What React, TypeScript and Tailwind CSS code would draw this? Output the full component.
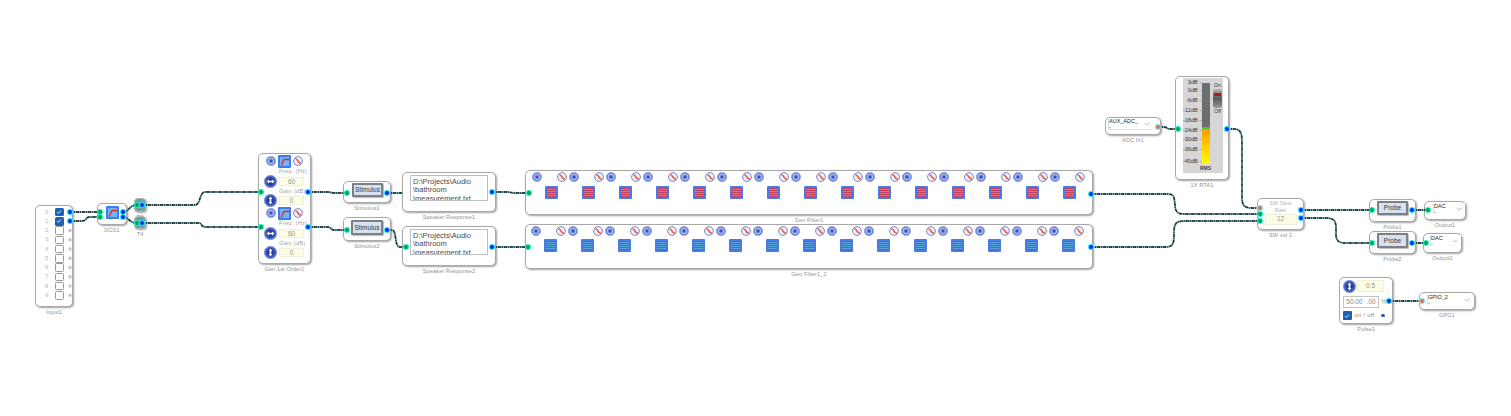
import type { ReactNode } from "react";
import { ChevronDown } from "lucide-react";

const Node = ({
  pos,
  box,
  label,
  children,
}: {
  pos: string;
  box: string;
  label: string;
  children?: ReactNode;
}) => (
  <div className={`absolute flex flex-col items-center ${pos}`}>
    <div className={`shrink-0 rounded-[5px] border border-[#a8a8a8] bg-white shadow-[1px_1px_2px_#a0a0a0] ${box}`}>
      {children}
    </div>
    <span className="mt-[1px] text-[5.5px] leading-[8px] tracking-[0.15px] whitespace-nowrap text-[#8f8f8f]">{label}</span>
  </div>
);

const CircleIcon = () => (
  <svg width="10" height="10" viewBox="0 0 10 10" className="shrink-0">
    <circle cx="5" cy="5" r="4.6" fill="#6a84d8" stroke="#8f9bd8" strokeWidth="0.8" />
    <circle cx="5" cy="5" r="2.8" fill="none" stroke="#c9d4f6" strokeWidth="0.8" />
    <circle cx="5" cy="5" r="1.2" fill="#3553b8" />
  </svg>
);

const WaveIcon = () => (
  <svg width="10" height="10" viewBox="0 0 10 10" className="shrink-0">
    <circle cx="5" cy="5" r="4.4" fill="#eeeef8" stroke="#7a86cc" strokeWidth="1" />
    <path d="M2.4 3.2C3.6 2.4 4.2 4 5 5s1.6 2.6 2.8 1.6" fill="none" stroke="#f0503c" strokeWidth="1.5" />
  </svg>
);

const BandIcon = () => (
  <svg width="13" height="13" viewBox="0 0 13 13" className="shrink-0">
    <rect width="13" height="13" rx="1" fill="#4a78e6" />
    <rect x="2" y="2" width="9" height="9" fill="#5aa4d8" />
    {[2, 4, 6, 8, 10].map((y) => (
      <rect key={y} x="2" y={y} width="9" height="1" fill="#c04060" />
    ))}
  </svg>
);

const FilterIcon = () => (
  <svg width="13" height="13" viewBox="0 0 13 13" className="shrink-0">
    <rect width="13" height="13" rx="1" fill="#3f7cf0" />
    <rect x="2" y="2" width="9" height="9" fill="#6fb4f4" />
    <path d="M3 10.5c1.5 0 1.5-6 3.5-6H11" fill="none" stroke="#e02828" strokeWidth="1.4" />
  </svg>
);

const Knob = ({ vertical }: { vertical?: boolean }) => (
  <svg width="13" height="13" viewBox="0 0 13 13" className="shrink-0">
    <circle cx="6.5" cy="6.5" r="6.2" fill="#4a68d0" stroke="#8494dc" strokeWidth="0.6" />
    <circle cx="6.5" cy="6.5" r="4.2" fill="#2c3f96" />
    {vertical ? (
      <path d="M6.5 2.6 4.6 5h3.8zM6.5 10.4 4.6 8h3.8zM5.7 5h1.6v3H5.7z" fill="#fff" />
    ) : (
      <path d="M2.6 6.5 5 4.6v3.8zM10.4 6.5 8 4.6v3.8zM5 5.7h3v1.6H5z" fill="#fff" />
    )}
  </svg>
);

const Field = ({ value, size }: { value: string; size: string }) => (
  <div className={`flex items-center justify-center border border-[#efefdc] bg-[#fdfde6] text-[6.5px] text-[#929292] ${size}`}>
    {value}
  </div>
);

const GenLabel = ({ text, h }: { text: string; h: string }) => (
  <div className={`ml-[20px] w-[25px] whitespace-nowrap text-center text-[5.5px] tracking-[0.35px] text-[#a0a0a0] ${h}`}>
    {text}
  </div>
);

const GenGroup = () => (
  <div className="flex h-[52px] flex-col">
    <div className="flex h-[12px] items-center gap-[2px] pl-[7px]">
      <CircleIcon />
      <FilterIcon />
      <WaveIcon />
    </div>
    <GenLabel text="Freq. (Hz)" h="h-[8px] leading-[8px]" />
    <div className="flex h-[13px] items-center gap-[2px] pl-[5px]">
      <Knob />
      <Field value="60" size="h-[9px] w-[25px]" />
    </div>
    <GenLabel text="Gain (dB)" h="h-[6px] leading-[6px]" />
    <div className="flex h-[13px] items-center gap-[2px] pl-[5px]">
      <Knob vertical />
      <Field value="0" size="h-[9px] w-[25px]" />
    </div>
  </div>
);

const FilterBands = ({ inset, gap }: { inset: string; gap: string }) => (
  <div className={`flex ${inset}`}>
    {Array.from({ length: 15 }).map((_, i) => (
      <div key={i} className="flex w-[37px] shrink-0 flex-col">
        <div className="flex h-[10px] gap-[15px]">
          <CircleIcon />
          <WaveIcon />
        </div>
        <div className={`pl-[13px] ${gap}`}>
          <BandIcon />
        </div>
      </div>
    ))}
  </div>
);

const PushButton = ({ text, size }: { text: string; size: string }) => (
  <div className={`flex items-center justify-center rounded-[1px] border-2 border-[#7d7f83] bg-[#d6e2f3] text-[6.5px] text-[#333] shadow-[1px_1px_1px_#bbb] ${size}`}>
    {text}
  </div>
);

const SpeakerText = () => (
  <div className="h-[26px] overflow-hidden border border-[#bdbdbd] px-[2px] pt-[1.5px] text-[7.5px] leading-[8.5px] whitespace-nowrap text-[#4a4a4a]">
    <div>D:\Projects\Audio</div>
    <div>\bathroom</div>
    <div>\measurement.txt</div>
  </div>
);

const SelectBox = ({ value, size }: { value: string; size: string }) => (
  <div className={`flex items-center justify-between border-l border-[#ddd] bg-white pr-[2px] ${size}`}>
    <span className="text-[5.5px] leading-[6px] text-[#222]">
      {value}
      <br />-
    </span>
    <ChevronDown size={8} strokeWidth={1.4} className="text-[#777]" />
  </div>
);

const scale = [
  { t: "3dB", h: "h-[8px]" },
  { t: "0dB", h: "h-[10px]" },
  { t: "-6dB", h: "h-[10px]" },
  { t: "-12dB", h: "h-[10px]" },
  { t: "-18dB", h: "h-[10px]" },
  { t: "-24dB", h: "h-[9px]" },
  { t: "-30dB", h: "h-[10px]" },
  { t: "-36dB", h: "h-[12px]" },
  { t: "-45dB", h: "h-[7px]" },
];

const wires = [
  "M70 212H100",
  "M70 221H82C87 221 85 217 90 217H100",
  "M123 212C130 212 128 205 137 205",
  "M123 217C130 217 128 223 137 223",
  "M142 205H195C201 205 199 192 205 192H261",
  "M142 223H199C202 223 201 227 205 227H261",
  "M308 192H328C331 192 331 193 334 193H347",
  "M308 227H328C331 227 331 230 334 230H347",
  "M387 193H403",
  "M387 230H392C397 230 394 247 400 247H406",
  "M492 192H508C511 192 511 193 514 193H529",
  "M492 247H528",
  "M1091 194H1168C1175 194 1174 198 1175 205C1175 212 1178 214 1184 214H1260",
  "M1091 247H1166C1174 247 1174 242 1174 232C1174 224 1176 221 1184 221H1260",
  "M1158 127H1164C1167 127 1167 129 1170 129H1178",
  "M1227 129H1234C1241 129 1242 134 1242 142V198C1242 206 1245 208 1252 208H1260",
  "M1301 210H1372",
  "M1301 218H1326C1334 218 1336 221 1336 228V235C1336 241 1339 243 1346 243H1372",
  "M1412 210H1428",
  "M1412 243H1426",
  "M1389 301H1422",
];

const outPorts = [
  [70, 212], [70, 221], [123, 212], [123, 217], [142, 205], [142, 223],
  [308, 192], [308, 227], [387, 193], [387, 230], [492, 192], [492, 247],
  [1091, 194], [1091, 247], [1227, 129], [1301, 210], [1301, 218],
  [1412, 210], [1412, 243], [1389, 301],
];

const inPorts = [
  [100, 212], [100, 217], [137, 205], [137, 223], [261, 192], [261, 227],
  [347, 193], [347, 230], [406, 247], [529, 193], [528, 247], [1178, 129],
  [1260, 214], [1260, 221], [1372, 210], [1372, 243], [1428, 210], [1426, 243],
];

const orangePorts = [
  [1158, 127], [1260, 208], [1422, 301],
];

// unused channel outputs on the input block
const idlePorts = [2, 3, 4, 5, 6, 7, 8, 9].map((n) => [70, 212 + n * 9.26]);

const App = () => {
  return (
    <div className="relative h-[416px] w-[1511px] overflow-hidden bg-white font-['Liberation_Sans',sans-serif]">
      <Node pos="left-[35px] top-[205px]" box="h-[102px] w-[38px] pt-[1.4px]" label="Input1">
        {Array.from({ length: 10 }).map((_, i) => (
          <div key={i} className="flex h-[9.26px] items-center gap-[6px] pl-[9px]">
            <span className="w-[4px] text-[6px] text-[#b8b8b8]">{i}</span>
            {i < 2 ? (
              <div className="flex h-[8.5px] w-[8.5px] items-center justify-center rounded-[1.5px] bg-[#1d62b0]">
                <svg width="6" height="6" viewBox="0 0 6 6">
                  <path d="M1 3l1.4 1.4L5 1.6" fill="none" stroke="#fff" strokeWidth="0.8" />
                </svg>
              </div>
            ) : (
              <div className="h-[8.5px] w-[8.5px] rounded-[1.5px] border border-[#999] bg-white" />
            )}
          </div>
        ))}
      </Node>

      <Node pos="left-[97px] top-[203px]" box="flex h-[22px] w-[30px] justify-center pt-[2px]" label="DCS1">
        <FilterIcon />
      </Node>

      <Node pos="left-[134px] top-[198px]" box="h-[14px] w-[12px] !rounded-[4px] !bg-[#6f9f9c] !border-[#b5b5b5]" label="T3" />
      <Node pos="left-[134px] top-[216px]" box="h-[13px] w-[12px] !rounded-[4px] !bg-[#6f9f9c] !border-[#b5b5b5]" label="T4" />

      <Node pos="left-[258px] top-[153px]" box="h-[111px] w-[53px] pt-[1px]" label="Gen 1st Order1">
        <GenGroup />
        <GenGroup />
      </Node>

      <Node pos="left-[343px] top-[181px]" box="h-[22px] w-[48px] pt-[1px] pl-[8px]" label="Stimulus1">
        <PushButton text="Stimulus" size="h-[14px] w-[31px]" />
      </Node>
      <Node pos="left-[343px] top-[217px]" box="h-[24px] w-[48px] pt-[2px] pl-[7px]" label="Stimulus2">
        <PushButton text="Stimulus" size="h-[15px] w-[32px]" />
      </Node>

      <Node pos="left-[402px] top-[172px]" box="h-[40px] w-[94px] px-[7px] pt-[2px]" label="Speaker Response1">
        <SpeakerText />
      </Node>
      <Node pos="left-[402px] top-[226px]" box="h-[40px] w-[94px] px-[7px] pt-[2px]" label="Speaker Response2">
        <SpeakerText />
      </Node>

      <Node pos="left-[525px] top-[170px]" box="h-[45px] w-[568px]" label="Gen Filter1">
        <FilterBands inset="pl-[6px] pt-[1px]" gap="pt-[4px]" />
      </Node>
      <Node pos="left-[525px] top-[224px]" box="h-[45px] w-[568px]" label="Gen Filter1_2">
        <FilterBands inset="pl-[5px] pt-[1px]" gap="pt-[3px]" />
      </Node>

      <Node pos="left-[1105px] top-[117px]" box="h-[18px] w-[56px] pl-[2px]" label="ADC In1">
        <SelectBox value="AUX_ADC_" size="mt-[1px] h-[11px] w-[45px] border-b border-[#ccc]" />
      </Node>

      <Node pos="left-[1175px] top-[76px]" box="h-[104px] w-[54px] pl-[7px] pt-[1px]" label="1X RTA1">
        <div className="flex h-[95px] w-[40px] bg-[#d6d6d6]">
          <div className="flex w-[18px] flex-col items-end">
            {scale.map((s) => (
              <div key={s.t} className={`whitespace-nowrap text-[5.5px] leading-[8px] text-[#333] ${s.h}`}>
                {s.t} -
              </div>
            ))}
            <div className="w-full pl-[17px] text-[5px] font-bold leading-[8px] text-[#444]">RMS</div>
          </div>
          <div className="ml-[1px] flex h-[95px] w-[8px] flex-col pt-[5px]">
            <div className="h-[44px] bg-[#6d6d6d]" />
            <div className="h-[1.5px] bg-[#49c23e]" />
            <div className="h-[35px] bg-linear-to-b from-[#ff9a00] to-[#ffff00]" />
          </div>
          <div className="ml-[3px] flex w-[9px] flex-col items-center pt-[4px] text-[5.5px] leading-[7px] text-[#333]">
            <span>On</span>
            <div className="h-[19px] w-[9px] rounded-[2px] bg-linear-to-b from-[#b5b5b5] via-[#5a5a5a] to-[#9a9a9a] px-[1px] pt-[4px]">
              <div className="h-[3px] bg-[#a81c1c]" />
            </div>
            <span>Off</span>
          </div>
        </div>
      </Node>

      <Node pos="left-[1257px] top-[198px]" box="flex h-[32px] w-[47px] flex-col items-center" label="SW vol 1">
        <div className="mt-[1px] text-center text-[5.5px] leading-[6.5px] text-[#b5b5b5]">
          SW Slew
          <br />
          Rate
        </div>
        <Field value="12" size="mt-[0.5px] h-[11px] w-[32px]" />
      </Node>

      <Node pos="left-[1369px] top-[199px]" box="h-[23px] w-[47px] pt-[1px] pl-[7px]" label="Probe1">
        <PushButton text="Probe" size="h-[14px] w-[31px]" />
      </Node>
      <Node pos="left-[1369px] top-[231px]" box="h-[23px] w-[47px] pt-[1px] pl-[7px]" label="Probe2">
        <PushButton text="Probe" size="h-[15px] w-[31px]" />
      </Node>

      <Node pos="left-[1424px] top-[201px]" box="h-[19px] w-[42px] pl-[8px] pt-[1px]" label="Output1">
        <SelectBox value="DAC" size="h-[11px] w-[32px]" />
      </Node>
      <Node pos="left-[1423px] top-[233px]" box="h-[20px] w-[39px] pl-[6px] pt-[1px]" label="Output2">
        <SelectBox value="DAC" size="h-[11px] w-[31px]" />
      </Node>

      <Node pos="left-[1339px] top-[277px]" box="flex h-[47px] w-[54px] flex-col pl-[3px] pt-[2px]" label="Pulse1">
        <div className="flex h-[12px] items-center gap-[1px]">
          <Knob vertical />
          <Field value="0.5" size="h-[12px] w-[27px]" />
        </div>
        <div className="mt-[4px] flex items-center gap-[2px]">
          <div className="flex h-[12px] w-[36px] items-center justify-center gap-[4px] border border-[#c4c4c4] text-[6.5px] text-[#888]">
            <span>50.00</span>
            <span>.00</span>
          </div>
          <span className="text-[6.5px] text-[#999]">%</span>
        </div>
        <div className="mt-[3px] flex items-center gap-[3px]">
          <div className="flex h-[8.5px] w-[8.5px] items-center justify-center rounded-[1px] bg-[#1d62b0]">
            <svg width="6" height="6" viewBox="0 0 6 6">
              <path d="M1 3l1.4 1.4L5 1.6" fill="none" stroke="#fff" strokeWidth="0.8" />
            </svg>
          </div>
          <span className="text-[6px] tracking-[0.2px] text-[#888]">on / off</span>
          <div className="ml-[4px] h-[3.5px] w-[3.5px] rounded-full bg-[#3a50c0]" />
        </div>
      </Node>

      <Node pos="left-[1419px] top-[292px]" box="h-[18px] w-[56px] pl-[7px] pt-[1px]" label="GPO1">
        <SelectBox value="GPIO_2" size="h-[11px] w-[46px]" />
      </Node>

      {/* wires and ports sit on top of the blocks */}
      <svg width="1511" height="416" className="pointer-events-none absolute top-0 left-0">
        {wires.map((d) => (
          <g key={d} fill="none">
            <path d={d} stroke="#86a8a8" strokeWidth="2" />
            <path d={d} stroke="#08262e" strokeWidth="1.3" strokeDasharray="3 1 1 1" />
          </g>
        ))}
        {outPorts.map(([x, y]) => (
          <g key={`o${x}-${y}`}>
            <circle cx={x} cy={y} r="3" fill="#19e8ff" />
            <circle cx={x} cy={y} r="1.9" fill="#0020f0" />
          </g>
        ))}
        {inPorts.map(([x, y]) => (
          <g key={`i${x}-${y}`}>
            <circle cx={x} cy={y} r="3" fill="#19f0d0" />
            <circle cx={x} cy={y} r="1.9" fill="#00a040" />
          </g>
        ))}
        {orangePorts.map(([x, y]) => (
          <g key={`p${x}-${y}`}>
            <circle cx={x} cy={y} r="3" fill="#7ce8e0" />
            <circle cx={x} cy={y} r="1.9" fill="#f06a4a" />
          </g>
        ))}
        {idlePorts.map(([x, y]) => (
          <circle key={y} cx={x} cy={y} r="1.7" fill="#d8b8e0" />
        ))}
      </svg>
    </div>
  );
};

export default App;
